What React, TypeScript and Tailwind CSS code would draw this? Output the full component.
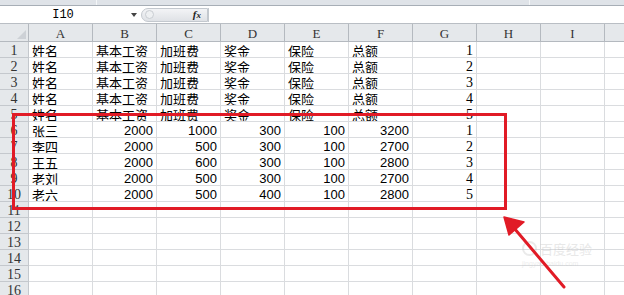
import React from "react";

const cols = ["A", "B", "C", "D", "E", "F", "G", "H", "I", "J"];

type Row = (string | number)[];

const header: Row = ["姓名", "基本工资", "加班费", "奖金", "保险", "总额"];

const data: Row[] = [
  [...header, 1],
  [...header, 2],
  [...header, 3],
  [...header, 4],
  [...header, 5],
  ["张三", 2000, 1000, 300, 100, 3200, 1],
  ["李四", 2000, 500, 300, 100, 2700, 2],
  ["王五", 2000, 600, 300, 100, 2800, 3],
  ["老刘", 2000, 500, 300, 100, 2700, 4],
  ["老六", 2000, 500, 400, 100, 2800, 5],
];

const totalRows = 16;

function Cell({ value, col }: { value?: string | number; col: number }) {
  if (value === undefined) {
    return <div className="h-[16px] border-r border-b border-[#dadcdf]" />;
  }
  const isNum = typeof value === "number";
  // column G holds the serial numbers, drawn in the serif face
  const serif = col === 6;
  return (
    <div
      className={`h-[16px] border-r border-b border-[#dadcdf] flex items-center overflow-hidden whitespace-nowrap leading-[15px] pt-[1px] ${
        isNum ? "justify-end pr-[3px]" : "justify-start pl-[3px]"
      } ${
        serif
          ? "font-['Liberation_Serif',serif] text-[14px]"
          : isNum
            ? "font-['Liberation_Sans',Arial,sans-serif] text-[13px]"
            : "font-['Noto_Sans_CJK_SC',sans-serif] text-[13px]"
      } text-black`}
    >
      {value}
    </div>
  );
}

export default function App() {
  return (
    <div className="relative w-[624px] h-[295px] overflow-hidden bg-white">
      {/* ribbon edge */}
      <div className="flex h-[6px] bg-[#dfe3e8] border-b border-[#a7aeb6]">
        <div className="w-[97px] border-r border-[#f4f6f8]" />
        <div className="w-[433px] border-r border-[#f4f6f8]" />
        <div className="flex-1" />
      </div>

      {/* formula bar */}
      <div className="flex h-[17px] items-center bg-white">
        <div className="w-[126px] text-center font-['Liberation_Mono',monospace] text-[12px] text-black leading-none pt-[1px]">
          I10
        </div>
        <div className="w-[15px] flex justify-center">
          <div className="w-0 h-0 border-l-[3px] border-r-[3px] border-t-[4px] border-l-transparent border-r-transparent border-t-[#444]" />
        </div>
        <div className="flex h-[14px] w-[67px] items-center rounded-l-full bg-gradient-to-b from-[#f3f4f6] to-[#dfe2e6] border border-[#c3c8ce]">
          <div className="ml-[3px] w-[9px] h-[9px] rounded-full border border-[#c9cdd2] bg-[#eef0f2]" />
          <div className="flex-1" />
          <span className="mr-[6px] font-['Liberation_Serif',serif] italic font-bold text-[11px] leading-none text-[#222]">
            f<span className="text-[9px]">x</span>
          </span>
        </div>
        <div className="flex-1 h-[14px] border-l border-[#c3c8ce]" />
      </div>

      {/* sheet */}
      <div className="grid grid-cols-[29px_repeat(10,64px)] border-t border-[#b9bec4]">
        {/* header row */}
        <div className="relative h-[18px] bg-[#e5e8eb] border-r border-b border-[#b4b9bf]">
          <div className="absolute right-[2px] bottom-[2px] w-0 h-0 border-b-[9px] border-l-[9px] border-l-transparent border-b-[#cdd1d6]" />
        </div>
        {cols.map((c) => (
          <div
            key={c}
            className="h-[18px] bg-[#e5e8eb] border-r border-b border-[#b4b9bf] flex items-center justify-center pt-[1px] font-['Liberation_Serif',serif] text-[13px] leading-[15px] text-[#333]"
          >
            {c}
          </div>
        ))}

        {Array.from({ length: totalRows }, (_, r) => (
          <React.Fragment key={r}>
            <div className="h-[16px] bg-[#e5e8eb] border-r border-b border-[#c4c8cd] flex items-center justify-center pt-[1px] leading-[15px] font-['Liberation_Serif',serif] text-[14px] text-[#333]">
              {r + 1}
            </div>
            {cols.map((c, ci) => (
              <Cell key={c} col={ci} value={data[r]?.[ci]} />
            ))}
          </React.Fragment>
        ))}
      </div>

      {/* annotation: red frame */}
      <div className="absolute left-[12px] top-[113px] w-[495px] h-[97px] border-[3px] border-[#e11b26]" />

      {/* watermark */}
      <div className="absolute left-[522px] top-[241px] flex flex-col items-start opacity-30 pointer-events-none">
        <div className="flex items-center gap-[3px]">
          <div className="w-[15px] h-[15px] rounded-full border-2 border-[#bbb]" />
          <span className="font-['Noto_Sans_CJK_SC',sans-serif] text-[13px] leading-none text-[#b5b5b5]">百度经验</span>
        </div>
        <span className="mt-[4px] font-['Liberation_Sans',sans-serif] text-[7px] leading-none text-[#c5c5c5]">jingyan.baidu.com</span>
      </div>

      {/* annotation: arrow */}
      <svg className="absolute left-0 top-0 pointer-events-none" width="624" height="295" viewBox="0 0 624 295">
        <line x1="564" y1="287" x2="514" y2="228" stroke="#e11b26" strokeWidth="3" strokeLinecap="round" />
        <polygon points="504,217 509,235 524,222" fill="#e11b26" stroke="#e11b26" strokeWidth="1.5" strokeLinejoin="round" />
      </svg>
    </div>
  );
}
